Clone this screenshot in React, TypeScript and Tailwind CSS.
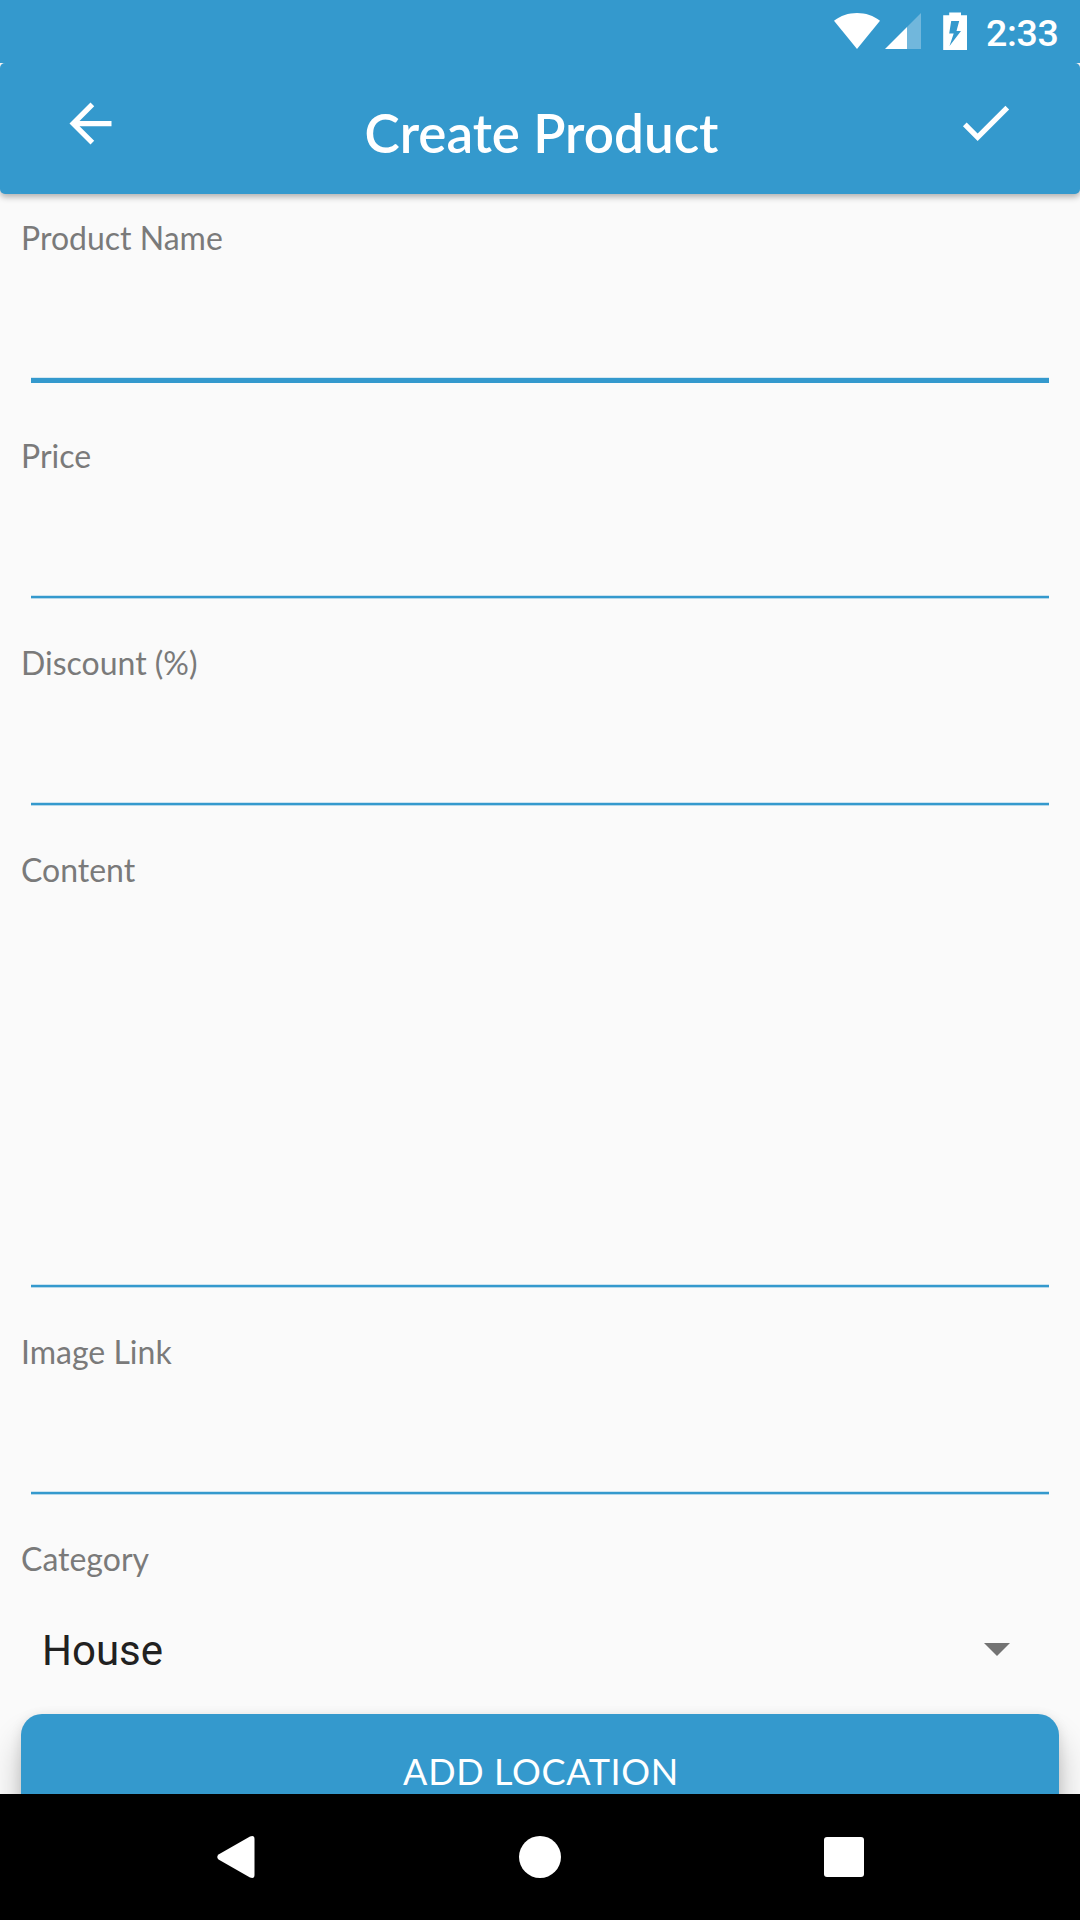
type FieldProps = { label: string; focused?: boolean; multiline?: boolean };

function Label({ children }: { children: string }) {
  return (
    <div className="h-10 pl-[21px] text-[32px] leading-[41px] whitespace-nowrap text-[#7a7a7a]">
      {children}
    </div>
  );
}

function Field({ label, focused, multiline }: FieldProps) {
  return (
    <div className={focused ? 'mb-[52px]' : 'mb-[43px]'}>
      <Label>{label}</Label>
      <div className={multiline ? 'h-[395px]' : 'h-[120px]'} />
      <div
        className={
          focused
            ? 'mx-[31px] h-1.5 border-t border-[#d5e8f2] bg-[#3499cd]'
            : 'mx-[31px] h-1 border-y border-t-[#cbe3f0] border-b-[#b4d8eb] bg-[#3499cd]'
        }
      />
    </div>
  );
}

function StatusBar() {
  return (
    <div className="z-20 flex h-[63px] shrink-0 items-start justify-end bg-[#3499cd] text-white">
      <svg className="mt-[13px] h-9 w-[46px]" viewBox="0 0 46 36" fill="currentColor">
        <path d="M0 7.7C6.5 2.7 14.5 0 23 0s16.500 2.700 23 7.700L23 36z" />
      </svg>
      <svg className="mt-[13px] ml-[5px] h-9 w-9" viewBox="0 0 36 36" fill="currentColor">
        <path d="M22 14 36 0v36H22z" opacity=".3" />
        <path d="M0 36 22 14v22z" />
      </svg>
      <svg className="mt-3 ml-[22px] h-[38px] w-6" viewBox="0 0 24 38" fill="currentColor">
        <path
          fillRule="evenodd"
          d="M6.200 .5H18V3.200H24V38H.2V3.200H6.200zM8.200 9 6.200 21.500h4.500L6.500 34 18 19h-4.500L16.200 9z"
        />
      </svg>
      <span className="mt-[11px] mr-5 ml-[19px] w-[74px] font-['Roboto'] text-[37.5px] leading-[45px] font-medium tracking-[-0.3px]">
        2:33
      </span>
    </div>
  );
}

function AppBar() {
  return (
    <header className="z-10 flex h-[131px] shrink-0 items-start justify-between rounded-[5px] bg-[#3499cd] pr-[63px] pl-[59px] text-white shadow-[0_3px_6px_rgba(0,0,0,0.3)]">
      <svg className="mt-[29px] size-[63px]" viewBox="0 0 24 24" fill="currentColor">
        <path d="M20 11H7.830l5.590-5.590L12 4l-8 8 8 8 1.410-1.410L7.830 13H20v-2z" />
      </svg>
      <h1 className="mt-[37px] pl-[7px] text-[53px] leading-[65px] font-semibold">Create Product</h1>
      <svg className="mt-7 size-[63px]" viewBox="0 0 24 24" fill="currentColor">
        <path d="M9 16.170 4.830 12l-1.420 1.410L9 19 21 7l-1.410-1.410z" />
      </svg>
    </header>
  );
}

function NavBar() {
  return (
    <nav className="z-10 grid h-[126px] shrink-0 grid-cols-[304px_304px_304px] items-center justify-center bg-black text-white">
      <svg className="ml-[133px] h-[42px] w-[38px]" viewBox="0 0 38 42" fill="currentColor">
        <path d="M1.500 18.600 33 .5Q37.500-1.200 37.500 3v36q0 4.200-4.500 2.500L1.500 23.400Q-1 21 1.500 18.600z" />
      </svg>
      <span className="size-[42px] justify-self-center rounded-full bg-white" />
      <span className="size-10 justify-self-center rounded-[3px] bg-white" />
    </nav>
  );
}

export default function App() {
  return (
    <div className="flex h-[1920px] w-[1080px] flex-col overflow-hidden bg-[#fafafa] font-['Lato',sans-serif]">
      <StatusBar />
      <AppBar />
      <main className="min-h-0 flex-1 overflow-hidden pt-[23px]">
        <Field label="Product Name" focused />
        <Field label="Price" />
        <Field label="Discount (%)" />
        <Field label="Content" multiline />
        <Field label="Image Link" />
        <Label>Category</Label>
        <div className="mt-12 flex h-[49px] items-start justify-between pr-[70.5px] pl-[42px]">
          <span className="font-['Roboto'] text-[42px] leading-[49px] text-[#212121]">House</span>
          <svg className="mt-[17px] h-[13px] w-[26px] text-[#737373]" viewBox="0 0 26 13" fill="currentColor">
            <path d="M0 0h26L13 13z" />
          </svg>
        </div>
        <button className="mx-[21px] mt-[39px] flex h-[126px] w-[1038px] items-start justify-center rounded-[21px] bg-[#3499cd] pt-[35px] pl-0.5 text-[36px] leading-[44px] tracking-[0.65px] text-white shadow-[0_24px_32px_rgba(0,0,0,0.24),0_2px_12px_rgba(0,0,0,0.1)]">
          ADD LOCATION
        </button>
      </main>
      <NavBar />
    </div>
  );
}
